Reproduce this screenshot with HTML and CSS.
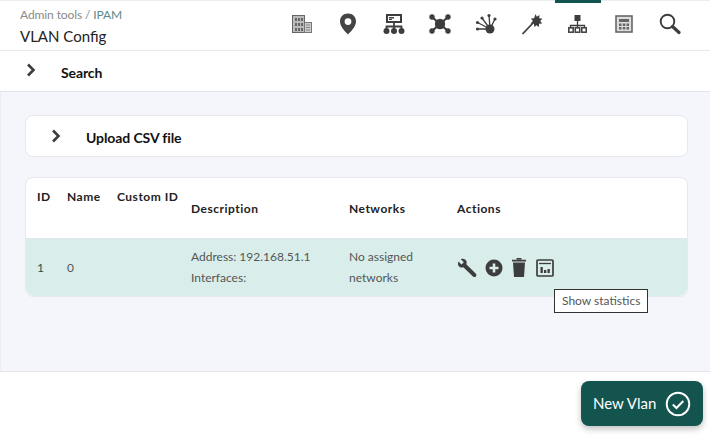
FILE: index.html
```html
<!DOCTYPE html>
<html>
  <head>
  <meta charset="utf-8">
  <title>VLAN Config</title>
  <link rel="stylesheet" href="styles.css">
  </head>
  <body>
    <div class="topbar">
      <div class="titles">
        <div class="crumbs">Admin tools / <span class="crumb-link">IPAM</span></div>
        <div class="page-title">VLAN Config</div>
      </div>
      <div class="tabs">
        <div class="tab">
          <svg width="22" height="20" viewBox="0 0 22 20"><rect x="1.500" y="1.500" width="12" height="17" fill="#bbb" stroke="#666"/><rect x="13.500" y="8.500" width="7" height="10" fill="#ccc" stroke="#777"/><path d="M4 4h2v3H4zM7 4h2v3H7zM10 4h2v3h-2zM4 9h2v3H4zM7 9h2v3H7zM10 9h2v3h-2zM4 14h2v3H4zM7 14h2v3H7zM10 14h2v3h-2z" fill="#666"/><path d="M15 11h4M15 13.500h4M15 16h4" stroke="#888"/></svg>
        </div>
        <div class="tab">
          <svg width="18" height="22" viewBox="0 0 18 22"><path fill-rule="evenodd" d="M9 .5C4.200.5 1 4 1 8.500c0 4.500 4.500 9.500 8 13 3.500-3.500 8-8.500 8-13C17 4 13.800.5 9 .5zM9 5.200a3.400 3.400 0 1 1 0 6.800 3.400 3.400 0 0 1 0-6.800z" fill="#444"/></svg>
        </div>
        <div class="tab">
          <svg width="22" height="20" viewBox="0 0 22 20"><path fill-rule="evenodd" d="M3 0h16v9H3zM5 2v5h12V2z" fill="#3d3d3d"/><path d="M6 3h5v1.500H6zM6 5h3v1H6z" fill="#3d3d3d"/><path d="M11 9v4M3.500 15v-2.500h15V15M11 12.500V15" stroke="#3d3d3d" stroke-width="1.800" fill="none"/><circle cx="3.500" cy="17" r="3" fill="#3d3d3d"/><circle cx="11" cy="17" r="3" fill="#3d3d3d"/><circle cx="18.500" cy="17" r="3" fill="#3d3d3d"/></svg>
        </div>
        <div class="tab">
          <svg width="22" height="20" viewBox="0 0 22 20"><path d="M3 3l16 14M19 3L3 17" stroke="#3d3d3d" stroke-width="2.200"/><circle cx="11" cy="10" r="5.200" fill="#3d3d3d"/><circle cx="3" cy="3" r="2.700" fill="#3d3d3d"/><circle cx="19" cy="3" r="2.700" fill="#3d3d3d"/><circle cx="3" cy="17" r="2.700" fill="#3d3d3d"/><circle cx="19" cy="17" r="2.700" fill="#3d3d3d"/></svg>
        </div>
        <div class="tab">
          <svg width="22" height="22" viewBox="0 0 22 22"><path d="M15 16L2.500 9.500M15 16L2.500 16M15 16L7 5M15 16L14 2M15 16L20 6" stroke="#3d3d3d" stroke-width="1.300"/><circle cx="15" cy="16" r="4.500" fill="#3d3d3d"/><circle cx="2.500" cy="9.500" r="1.600" fill="#3d3d3d"/><circle cx="2.500" cy="16" r="1.600" fill="#3d3d3d"/><circle cx="7" cy="5" r="1.600" fill="#3d3d3d"/><circle cx="14" cy="2.500" r="1.600" fill="#3d3d3d"/><circle cx="20" cy="6" r="1.600" fill="#3d3d3d"/></svg>
        </div>
        <div class="tab">
          <svg width="22" height="22" viewBox="0 0 22 22"><path d="M1.500 21L12 10" stroke="#3d3d3d" stroke-width="1.800"/><path d="M14.500 1l1.300 2.800L18.500 2l-.3 3.300 3.300.5-2.300 2.200 2 2.500-3.200.3.100 3.200-2.600-1.800L13.500 14l-.7-3.200-3.200-.3 2.300-2.400-2-2.500 3.200-.3z" fill="#3d3d3d"/></svg>
        </div>
        <div class="tab tab-active">
          <svg width="20" height="20" viewBox="0 0 20 20"><rect x="6.500" y="1" width="6" height="6" fill="#3d3d3d"/><path d="M9.500 7v4M2.500 14v-2.500h14V14M9.500 11v3" stroke="#3d3d3d" stroke-width="1.300" fill="none"/><rect x=".8" y="13.800" width="4.400" height="4.400" fill="none" stroke="#3d3d3d" stroke-width="1.500"/><rect x="7.300" y="13.800" width="4.400" height="4.400" fill="none" stroke="#3d3d3d" stroke-width="1.500"/><rect x="13.800" y="13.800" width="4.400" height="4.400" fill="none" stroke="#3d3d3d" stroke-width="1.500"/></svg>
        </div>
        <div class="tab">
          <svg width="18" height="18" viewBox="0 0 18 18"><rect x="1" y="1" width="16" height="16" fill="#ddd" stroke="#666" stroke-width="1.600"/><rect x="4" y="4" width="10" height="3" fill="#666"/><path d="M4 8.500h2.500V11H4zM7.800 8.500h2.500V11H7.800zM11.500 8.500H14V11h-2.500zM4 12h2.500v2.500H4zM7.800 12h2.500v2.500H7.800zM11.500 12H14v2.500h-2.500z" fill="#666"/></svg>
        </div>
        <div class="tab">
          <svg width="22" height="22" viewBox="0 0 22 22"><circle cx="8.500" cy="8.500" r="6.800" fill="none" stroke="#3d3d3d" stroke-width="1.900"/><path d="M13.500 13.500l6.500 6" stroke="#3d3d3d" stroke-width="3.200" stroke-linecap="round"/></svg>
        </div>
      </div>
    </div>

    <div class="search-bar">
      <svg class="chevron" width="10" height="14" viewBox="0 0 10 14"><path d="M2 1.500L7.500 7 2 12.500" fill="none" stroke="#3d3d3d" stroke-width="2.600"/></svg>
      <span class="bar-label">Search</span>
    </div>

    <div class="content">
      <div class="card upload">
        <svg class="chevron" width="10" height="14" viewBox="0 0 10 14"><path d="M2 1.500L7.500 7 2 12.500" fill="none" stroke="#3d3d3d" stroke-width="2.600"/></svg>
        <span class="bar-label">Upload CSV file</span>
      </div>

      <div class="card table-card">
        <table class="vlans">
          <thead>
            <tr>
              <th class="col-id top">ID</th>
              <th class="col-name top">Name</th>
              <th class="col-custom top">Custom ID</th>
              <th class="col-desc">Description</th>
              <th class="col-nets">Networks</th>
              <th>Actions</th>
            </tr>
          </thead>
          <tbody>
            <tr>
              <td class="link-num">1</td>
              <td>0</td>
              <td></td>
              <td>Address: 192.168.51.1<br>Interfaces:</td>
              <td>No assigned<br>networks</td>
              <td>
                <div class="actions">
                  <svg width="20" height="20" viewBox="0 0 20 20"><path d="M1.500 3.500L4.500 6.500 6.800 4.300 3.800 1.200C6 .2 8.800 1 9.500 3.500c.3 1 .1 2-.2 2.700l9.600 9.500c.8.900.7 1.900-.1 2.700-.9.900-1.900.9-2.800 0L6.300 9.200C4.800 9.800 3 9.500 1.800 8.200.8 7 .8 5 1.500 3.500z" fill="#3d3d3d"/></svg>
                  <svg width="18" height="18" viewBox="0 0 18 18"><path fill-rule="evenodd" d="M9 .5a8.500 8.500 0 1 1 0 17 8.500 8.500 0 0 1 0-17zM7.700 4.500v3.200H4.500v2.600h3.200v3.200h2.600v-3.200h3.200V7.700h-3.200V4.500z" fill="#3d3d3d"/></svg>
                  <svg class="trash" width="14" height="19" viewBox="0 0 14 19"><path d="M1 4.500h12L12 19H2zM0 1.800h14v1.600H0zM4.500 0h5v1.500h-5z" fill="#3d3d3d"/></svg>
                  <svg class="stats" width="18" height="18" viewBox="0 0 18 18"><rect x="1" y="1" width="16" height="16" rx="1" fill="none" stroke="#3d3d3d" stroke-width="1.700"/><path d="M3 4.500h12" stroke="#3d3d3d" stroke-width="1.300"/><path d="M4.500 8h2.300v6H4.500zM8 11h2.300v3H8zM11.500 10h2.300v4h-2.300z" fill="#3d3d3d"/></svg>
                  <div class="tooltip">Show statistics</div>
                </div>
              </td>
            </tr>
          </tbody>
        </table>
      </div>
    </div>

    <div class="footer">
      <button class="new-btn"><span class="btn-label">New Vlan</span>
        <svg width="26" height="26" viewBox="0 0 26 26"><circle cx="13" cy="13" r="11.300" fill="none" stroke="#fff" stroke-width="1.900"/><path d="M7.800 13.500l3.700 3.500 6.800-7" fill="none" stroke="#fff" stroke-width="2"/></svg>
      </button>
    </div>
  </body>
</html>
```

FILE: styles.css
```css
html, body {
  margin: 0;
  padding: 0;
}
body {
  width: 710px;
  height: 440px;
  overflow: hidden;
  background: #fff;
  font-family: Lato, "Open Sans", sans-serif;
  color: #3d3d3d;
}
.topbar {
  display: flex;
  justify-content: space-between;
  height: 49px;
  border-top: 1px solid #ececec;
  border-bottom: 1px solid #e8e9ee;
}
.titles {
  padding: 6px 0 0 20px;
}
.crumbs {
  font-size: 12px;
  line-height: 16px;
  color: #8a8a8a;
  letter-spacing: -0.1px;
}
.crumb-link {
  color: #5d8a8a;
}
.page-title {
  margin-top: 2px;
  font-size: 15px;
  line-height: 22px;
  color: #222;
}
.tabs {
  display: flex;
  margin-right: 17px;
}
.tab {
  display: flex;
  align-items: center;
  justify-content: center;
  width: 46px;
  height: 49px;
  margin-top: -1px;
  border-top: 3px solid transparent;
  box-sizing: border-box;
  padding-bottom: 4px;
}
.tab-active {
  border-top-color: #14544f;
}
.search-bar {
  display: flex;
  align-items: center;
  height: 40px;
  border-bottom: 1px solid #e4e5ec;
  padding-left: 26px;
}
.search-bar .chevron {
  margin-right: 25px;
  margin-top: -3px;
}
.search-bar .bar-label {
  padding-top: 2px;
}
.bar-label {
  font-size: 14px;
  font-weight: 700;
  color: #111;
  letter-spacing: -0.1px;
}
.content {
  height: 280px;
  box-sizing: border-box;
  padding: 23px 22px 0 25px;
  background: #f4f6fb;
  border-left: 1px solid #ececf2;
  border-bottom: 1px solid #e4e5ec;
  margin-bottom: 9px;
}
.content > .card {
  margin-left: -1px;
}
.card {
  background: #fff;
  border: 1px solid #e8e9ee;
  border-radius: 8px;
}
.upload {
  display: flex;
  align-items: center;
  height: 40px;
  padding-left: 25px;
  margin-bottom: 20px;
}
.upload .chevron {
  margin-right: 25px;
  margin-top: -1px;
}
.upload .bar-label {
  padding-top: 2px;
}
.vlans {
  width: 100%;
  table-layout: fixed;
  border-collapse: collapse;
  font-size: 12px;
}
.vlans th {
  height: 60px;
  padding: 2px 0 0 11px;
  text-align: left;
  vertical-align: middle;
  font-weight: 700;
  color: #222;
  letter-spacing: 0.5px;
  white-space: nowrap;
  border-bottom: 1px solid #e4e5ec;
  box-sizing: border-box;
}
.vlans th.top {
  vertical-align: top;
  padding-top: 11px;
}
.vlans td {
  height: 57px;
  padding: 0 0 0 11px;
  background: #d9eeeb;
  line-height: 21px;
  color: #555;
}
.vlans tbody tr td:first-child {
  border-radius: 0 0 0 8px;
}
.vlans tbody tr td:last-child {
  border-radius: 0 0 8px 0;
}
.vlans .link-num {
  color: #14544f;
}
.col-id { width: 30px; }
.col-name { width: 50px; }
.col-custom { width: 74px; }
.col-desc { width: 158px; }
.col-nets { width: 108px; }
.actions {
  position: relative;
  display: flex;
  align-items: center;
  gap: 8px;
  padding-top: 1px;
}
.trash {
  margin-left: 1px;
}
.stats {
  margin-left: 2px;
}
.tooltip {
  position: absolute;
  left: 97px;
  top: 32px;
  padding: 0 7px;
  background: #fff;
  border: 1px solid #333;
  font-size: 12px;
  line-height: 22px;
  white-space: nowrap;
  color: #555;
}
.footer {
  display: flex;
  justify-content: flex-end;
  padding-right: 7px;
}
.new-btn {
  display: flex;
  align-items: center;
  justify-content: space-between;
  width: 122px;
  height: 45px;
  padding: 0 12px;
  background: #14544f;
  border: 0;
  border-radius: 8px;
  box-shadow: 0 3px 6px rgba(0, 0, 0, 0.25);
  font-family: Lato, sans-serif;
  font-size: 15px;
  color: #fff;
}
.btn-label {
  padding-bottom: 2px;
}
```
